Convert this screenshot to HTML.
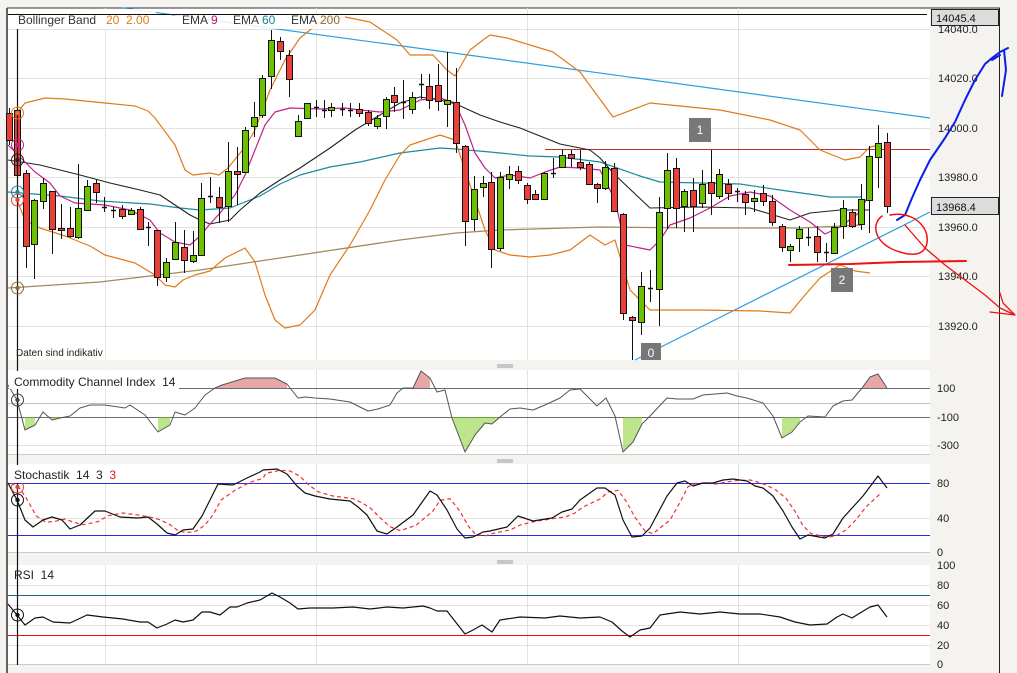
<!DOCTYPE html>
<html><head><meta charset="utf-8"><style>
html,body{margin:0;padding:0;background:#f4f3ef;width:1017px;height:673px;overflow:hidden;font-family:"Liberation Sans",sans-serif}
svg{display:block}
text{font-family:"Liberation Sans",sans-serif}
</style></head><body>
<svg id="s" width="1017" height="673" viewBox="0 0 1017 673" xmlns="http://www.w3.org/2000/svg">
<rect x="0" y="0" width="1017" height="673" fill="#f4f3ef"/>
<rect x="8" y="8" width="922" height="352" fill="#fff"/>
<rect x="8" y="370" width="922" height="85" fill="#fff"/>
<rect x="8" y="464" width="922" height="89" fill="#fff"/>
<rect x="8" y="565" width="922" height="100" fill="#fff"/>
<line x1="7" y1="8" x2="7" y2="673" stroke="#333" stroke-width="1.5"/>
<line x1="7" y1="8" x2="1000" y2="8" stroke="#333"/>
<line x1="999.5" y1="8" x2="999.5" y2="673" stroke="#222"/>
<line x1="8" y1="454.5" x2="930" y2="454.5" stroke="#c8ccd2"/>
<line x1="8" y1="552.5" x2="930" y2="552.5" stroke="#c8ccd2"/>
<line x1="8" y1="664.5" x2="930" y2="664.5" stroke="#c8ccd2"/>
<g stroke="#9a9a9a" stroke-width="1">
<line x1="497" y1="365" x2="513" y2="365"/><line x1="497" y1="367" x2="513" y2="367"/>
<line x1="497" y1="460" x2="513" y2="460"/><line x1="497" y1="462" x2="513" y2="462"/>
<line x1="497" y1="561" x2="513" y2="561"/><line x1="497" y1="563" x2="513" y2="563"/>
</g>
<g id="grid" stroke="#e2e2e2" stroke-width="1"></g>
<g id="draw"></g>
<rect x="9" y="9" width="147" height="20" fill="#fff" opacity="0.9"/>
<line x1="8" y1="14.5" x2="927" y2="14.5" stroke="#111"/>
<rect x="9" y="15" width="147" height="14" fill="#fff"/>
<rect x="175" y="15" width="170" height="14" fill="#fff" opacity="0.85"/>
<text x="18" y="24" font-size="12" fill="#333">Bollinger Band</text>
<text x="106" y="24" font-size="12" fill="#e07a1a">20&#160; 2.00</text>
<text x="182" y="24" font-size="12" fill="#333">EMA</text><text x="211" y="24" font-size="12" fill="#b0186e">9</text>
<text x="233" y="24" font-size="12" fill="#333">EMA</text><text x="262" y="24" font-size="12" fill="#1a7f95">60</text>
<text x="291" y="24" font-size="12" fill="#333">EMA</text><text x="320" y="24" font-size="12" fill="#8a6a30">200</text>
<text x="16" y="356" font-size="10" fill="#222">Daten sind indikativ</text>
<rect x="9" y="371" width="170" height="18" fill="#fff"/>
<text x="14" y="386" font-size="12" fill="#222">Commodity Channel Index&#160; 14</text>
<rect x="9" y="465" width="114" height="18" fill="#fff"/>
<text x="14" y="479" font-size="12" fill="#222">Stochastik&#160; 14&#160; 3&#160; <tspan fill="#e02020">3</tspan></text>
<text x="14" y="579" font-size="12" fill="#222">RSI&#160; 14</text>
<g font-size="11" fill="#222">
<text x="938" y="82">14020.0</text><text x="938" y="132">14000.0</text><text x="938" y="181">13980.0</text>
<text x="938" y="231">13960.0</text><text x="938" y="280">13940.0</text><text x="938" y="330">13920.0</text>
<text x="938" y="33">14040.0</text>
<text x="937" y="392">100</text><text x="937" y="421">-100</text><text x="937" y="449">-300</text>
<text x="937" y="487">80</text><text x="937" y="522">40</text><text x="937" y="556">0</text>
<text x="937" y="569">100</text><text x="937" y="589">80</text><text x="937" y="609">60</text>
<text x="937" y="629">40</text><text x="937" y="649">20</text><text x="937" y="668">0</text>
</g>
<rect x="931.5" y="9.5" width="67" height="16" fill="#dcdcdc" stroke="#222"/>
<text x="936" y="22" font-size="11" fill="#111">14045.4</text>
<rect x="931.5" y="197.5" width="67" height="17" fill="#dcdcdc" stroke="#222"/>
<text x="936" y="211" font-size="11" fill="#111">13968.4</text>
<rect x="689" y="118" width="22" height="24" fill="#777"/><text x="700" y="134" font-size="12" fill="#fff" text-anchor="middle">1</text>
<rect x="831" y="268" width="22" height="24" fill="#777"/><text x="842" y="284" font-size="12" fill="#fff" text-anchor="middle">2</text>
<rect x="641" y="343" width="20" height="17" fill="#777"/><text x="651" y="357" font-size="12" fill="#fff" text-anchor="middle">0</text>
<g fill="none" stroke-linecap="round" stroke-linejoin="round">
<path d="M897,220 L905,215 L912,198 L920,180 L930,160 L945,138 L955,122 L965,100 L975,80 L985,64 L992,58 L1000,52 L1008,48 M992,60 L1000,55 M1004,50 L1006,70 L1002,96" stroke="#0a1ee8" stroke-width="2"/>
<path d="M882,216 C870,225 875,245 900,252 C925,260 930,245 926,232 C920,218 905,212 890,215" stroke="#f01010" stroke-width="1.5"/>
<path d="M789,265 L850,264 L900,262 L966,261" stroke="#f01010" stroke-width="2"/>
<path d="M905,225 L925,248 L945,265 L965,280 L985,295 L1000,308 L1015,315 L990,312 M1000,293 L1003,303 L1015,315" stroke="#f01010" stroke-width="1.3"/>
</g>
</svg>
<script>
var NS="http://www.w3.org/2000/svg",g=document.getElementById('draw'),gr=document.getElementById('grid');
function el(p,t,a){var e=document.createElementNS(NS,t);for(var k in a)e.setAttribute(k,a[k]);p.appendChild(e);return e;}
function L(p,x1,y1,x2,y2,c,w){el(p,'line',{x1:x1,y1:y1,x2:x2,y2:y2,stroke:c,'stroke-width':w||1});}
[29,78,128,177,227,276,326].forEach(function(y){L(gr,8,y+.5,930,y+.5,'#e2e2e2');});
[105,316,527,738].forEach(function(x){L(gr,x+.5,8,x+.5,360,'#e2e2e2');L(gr,x+.5,370,x+.5,454,'#e2e2e2');L(gr,x+.5,464,x+.5,552,'#e2e2e2');L(gr,x+.5,565,x+.5,664,'#e2e2e2');});
[403,445].forEach(function(y){L(g,8,y+.5,930,y+.5,y==403?'#b8c4cc':'#e2e2e2');});
L(g,8,388.5,930,388.5,'#6a6a7a');L(g,8,417.5,930,417.5,'#6a6a7a');
L(g,8,518.5,930,518.5,'#e2e2e2');L(g,8,483.5,930,483.5,'#2a2ae0');L(g,8,535.5,930,535.5,'#2a2ae0');
[585,605,625,645].forEach(function(y){L(g,8,y+.5,930,y+.5,'#e2e2e2');});
L(g,8,595.5,930,595.5,'#1a6a7a');L(g,8,635.5,930,635.5,'#ee1010');
function pl(pts,c,w,extra){var a={points:pts.map(function(p){return p[0]+','+p[1]}).join(' '),fill:'none',stroke:c,'stroke-width':w||1,'stroke-linejoin':'round'};for(var k in extra)a[k]=extra[k];return el(g,'polyline',a);}
function P(s){return s.trim().split(/\s+/).map(function(t){return t.split(',').map(Number)});}
L(g,123,8,930,118,'#2aa0dc',1.2);
L(g,635,360,930,212,'#2aa0dc',1.2);
L(g,545,149.5,930,149.5,'#c0302a',1);
pl(P("8,288 100,282 200,270 300,255 400,240 456,233 500,230 600,227 700,228 800,228 862,225"),'#a08a5a',1.3);
pl(P("8,192 60,196 100,201 150,204 180,208 200,210 230,208 260,196 280,184 300,175 330,167 360,162 400,153 440,148 456,149 490,152 530,156 560,157 600,162 640,176 660,182 700,183 740,184 780,190 830,197 862,197"),'#1a8aa0',1.2);
pl(P("8,160 40,165 80,175 110,183 140,190 160,195 175,205 190,215 200,220 210,224 230,220 240,210 260,193 280,180 300,168 330,148 355,130 380,115 400,103 420,97 440,100 456,104 480,115 500,122 520,128 540,136 560,144 590,150 600,158 615,175 650,208 700,207 750,208 790,220 810,213 840,210 870,210"),'#222',1.1);
pl(P("8,145 20,157 35,172 50,183 60,196 75,203 90,204 105,205 130,210 150,220 160,233 175,242 190,245 200,236 210,224 220,213 235,195 245,175 255,150 265,125 275,112 290,108 320,109 345,108 360,110 380,112 400,110 420,100 440,98 455,103 465,125 475,153 485,168 495,178 510,175 530,178 545,172 560,167 580,168 600,170 615,200 625,245 650,250 660,240 670,225 690,218 710,208 730,196 750,192 770,196 790,210 810,222 825,234 840,227 860,212 867,198"),'#c0208a',1.2);
pl(P("17,113 25,103 45,98 65,99 105,103 135,106 148,111 155,118 175,145 185,170 193,175 210,173 219,175 228,168 245,147 255,130 270,90 285,60 300,38 320,22 345,17 370,22 397,40 410,55 433,55 447,70 455,76 463,62 470,50 483,40 490,35 507,38 553,52 580,72 613,117 650,103 720,110 770,120 800,130 820,150 845,160 860,157 870,147 880,145"),'#e07a1a',1.2);
pl(P("17,200 25,220 40,228 65,236 90,246 105,255 135,263 155,275 165,285 175,287 183,280 195,275 210,271 225,258 245,248 255,262 265,295 275,320 285,328 300,325 315,310 330,275 350,245 370,210 385,180 400,155 410,145 425,140 440,135 455,140 465,170 475,200 485,230 495,250 510,255 530,257 550,255 570,250 590,235 605,245 615,240 630,290 650,310 700,310 760,311 790,313 805,295 820,278 840,265 855,271 870,273"),'#e07a1a',1.2);
var C=[[9,113,140,108,145],[17,110,175,108,182],[26,173,246,170,268],[34,244,200,199,279],[43,201,183,178,209],[52,191,229,191,254],[61,228,230,204,239],[70,228,236,207,238],[78,237,208,164,239],[87,210,186,180,211],[96,183,192,180,203],[104,207,207,197,212],[113,210,210,207,218],[122,209,216,205,219],[131,214,210,208,215],[140,209,229,207,230],[148,227,227,222,246],[157,230,277,230,286],[166,277,262,258,282],[175,259,242,222,260],[184,247,260,230,273],[193,261,255,231,263],[201,255,198,183,256],[210,196,196,177,203],[219,197,207,187,223],[228,206,171,142,222],[237,171,174,147,205],[245,172,130,127,172],[254,126,117,102,137],[262,115,78,75,118],[271,76,40,30,89],[280,41,51,37,60],[289,55,79,50,97],[298,136,121,115,136],[307,118,103,103,118],[316,107,107,100,117],[324,110,110,100,118],[331,110,107,103,117],[342,109,109,103,116],[350,110,110,103,117],[359,109,113,103,117],[368,112,123,110,126],[377,126,118,115,129],[386,116,99,97,129],[394,95,102,87,112],[403,102,102,80,119],[412,109,97,92,114],[421,84,83,74,99],[429,86,100,74,109],[438,85,101,64,111],[447,104,100,52,127],[456,102,143,68,153],[465,146,221,145,246],[474,219,189,176,231],[483,187,183,176,197],[491,182,249,172,268],[500,248,177,172,251],[509,179,174,166,189],[518,171,180,166,184],[527,185,199,183,204],[535,194,199,190,200],[544,199,173,172,200],[553,173,173,158,178],[562,167,155,150,168],[571,154,158,150,167],[580,162,167,150,170],[589,164,184,162,185],[597,184,188,183,203],[605,188,167,161,190],[614,168,211,163,212],[623,214,313,213,320],[632,317,320,316,360],[641,322,286,272,335],[650,288,288,270,302],[659,289,212,197,326],[667,208,170,153,229],[676,168,208,158,228],[684,206,191,189,232],[693,190,206,178,232],[702,203,184,170,208],[711,182,193,150,215],[719,196,174,169,199],[728,184,193,179,200],[737,191,191,188,202],[745,194,202,191,215],[754,201,198,190,212],[763,193,201,185,206],[772,201,222,195,226],[782,226,247,224,252],[790,250,246,244,262],[799,238,229,226,252],[808,237,237,228,246],[817,236,252,226,262],[826,252,252,243,262],[834,253,227,223,253],[843,226,208,200,239],[852,212,226,209,228],[861,224,199,184,230],[869,200,156,146,233],[878,157,143,125,188],[887,142,206,133,213]];
C.forEach(function(c){var x=c[0],o=c[1],cl=c[2],h=c[3],l=c[4];L(g,x+.5,h,x+.5,l,'#111',1);
 if(Math.abs(o-cl)<1.5){L(g,x-2,o+.5,x+3,o+.5,'#111',1.5);return;}
 el(g,'rect',{x:x-2.5,y:Math.min(o,cl)+.5,width:6,height:Math.abs(o-cl),fill:cl<o?'#6cc000':'#e8403a',stroke:'#111','stroke-width':1});});
var cci=P("8,385 17,400 25,430 35,425 43,412 52,420 60,418 70,416 80,408 90,405 105,405 125,408 130,405 145,415 158,432 170,425 175,412 185,415 195,408 205,395 215,388 222,385 232,382 245,378 260,378 275,378 287,384 298,398 305,397 315,398 330,399 350,402 368,411 378,409 390,405 397,393 403,388 413,388 421,371 430,378 437,392 445,390 452,418 465,452 475,435 485,423 492,424 500,417 510,409 520,408 533,410 545,405 560,398 570,390 580,389 597,406 606,398 615,416 623,452 633,442 642,424 650,416 667,398 677,399 693,399 703,395 727,393 737,396 747,398 763,403 773,416 782,438 792,432 800,422 808,416 825,417 833,406 843,401 852,400 862,388 870,377 878,374 887,388");
function fillBetween(pts,base,above,col){var seg=[];
 for(var i=0;i<pts.length;i++){var p=pts[i],ok=above?p[1]<=base:p[1]>=base;
  if(ok){seg.push(p);}else if(seg.length){draw(seg);seg=[];}}
 if(seg.length)draw(seg);
 function draw(s){if(s.length<2)return;var d='M'+s[0][0]+','+base;s.forEach(function(p){d+=' L'+p[0]+','+p[1]});d+=' L'+s[s.length-1][0]+','+base+'Z';el(g,'path',{d:d,fill:col,opacity:0.5});}}
fillBetween(cci,388,true,'#d05050');fillBetween(cci,417,false,'#7ccc1a');
pl(cci,'#555',1);
var K=P("8,483 17,500 25,520 33,527 43,520 52,517 62,520 70,529 80,525 95,511 105,511 120,517 137,518 148,517 157,524 167,533 175,535 183,530 193,529 202,516 210,500 218,484 233,485 247,478 260,472 263,470 277,469 287,474 297,486 305,493 315,496 330,499 350,501 358,507 367,515 377,531 387,534 397,527 413,515 430,491 437,495 447,510 457,529 465,538 473,537 483,532 490,531 507,527 518,516 533,521 552,518 562,512 572,509 580,500 597,488 605,488 615,495 623,520 632,537 642,536 650,528 667,496 677,483 685,481 693,486 703,483 713,483 723,480 733,479 747,481 755,486 763,488 773,496 783,511 792,527 800,539 808,535 825,538 833,534 843,518 853,507 863,496 878,476 887,488");
var D=K.map(function(p,i){var a=K[Math.max(0,i-1)],b=K[Math.max(0,i-2)];return [p[0]+3,((p[1]+a[1]+b[1])/3).toFixed(1)];});
D=D.filter(function(p){return p[0]<=887});
pl(D,'#f03030',1.2,{'stroke-dasharray':'4,3'});
pl(K,'#111',1.2);
pl(P("8,604 17,615 25,625 35,618 43,617 53,622 70,623 87,615 103,617 123,619 140,622 148,622 157,628 167,624 175,620 183,622 193,620 202,612 210,612 220,615 230,607 237,607 247,603 260,600 272,593 280,597 290,603 298,609 310,608 333,608 353,607 370,609 387,607 403,608 413,607 423,606 430,608 437,611 447,611 465,634 473,630 482,625 492,632 500,620 520,617 545,618 560,616 580,618 600,617 612,622 622,631 630,637 640,630 650,628 660,615 680,612 700,614 720,612 740,614 760,614 780,617 795,622 810,625 827,624 837,617 843,614 852,618 860,613 870,607 878,605 887,617"),'#111',1.2);
L(g,17.5,12,17.5,665,'#111',1.2);
[[113,'#e07a1a'],[145,'#c0208a'],[160,'#222'],[192,'#1a8aa0'],[200,'#e8403a'],[288,'#8a6a30'],[400,'#444'],[500,'#111'],[487,'#e04040'],[615,'#111']].forEach(function(m){el(g,'circle',{cx:17.5,cy:m[0],r:6,fill:'none',stroke:m[1],'stroke-width':1});el(g,'circle',{cx:17.5,cy:m[0],r:2.2,fill:m[1]});});
</script>
</body></html>
